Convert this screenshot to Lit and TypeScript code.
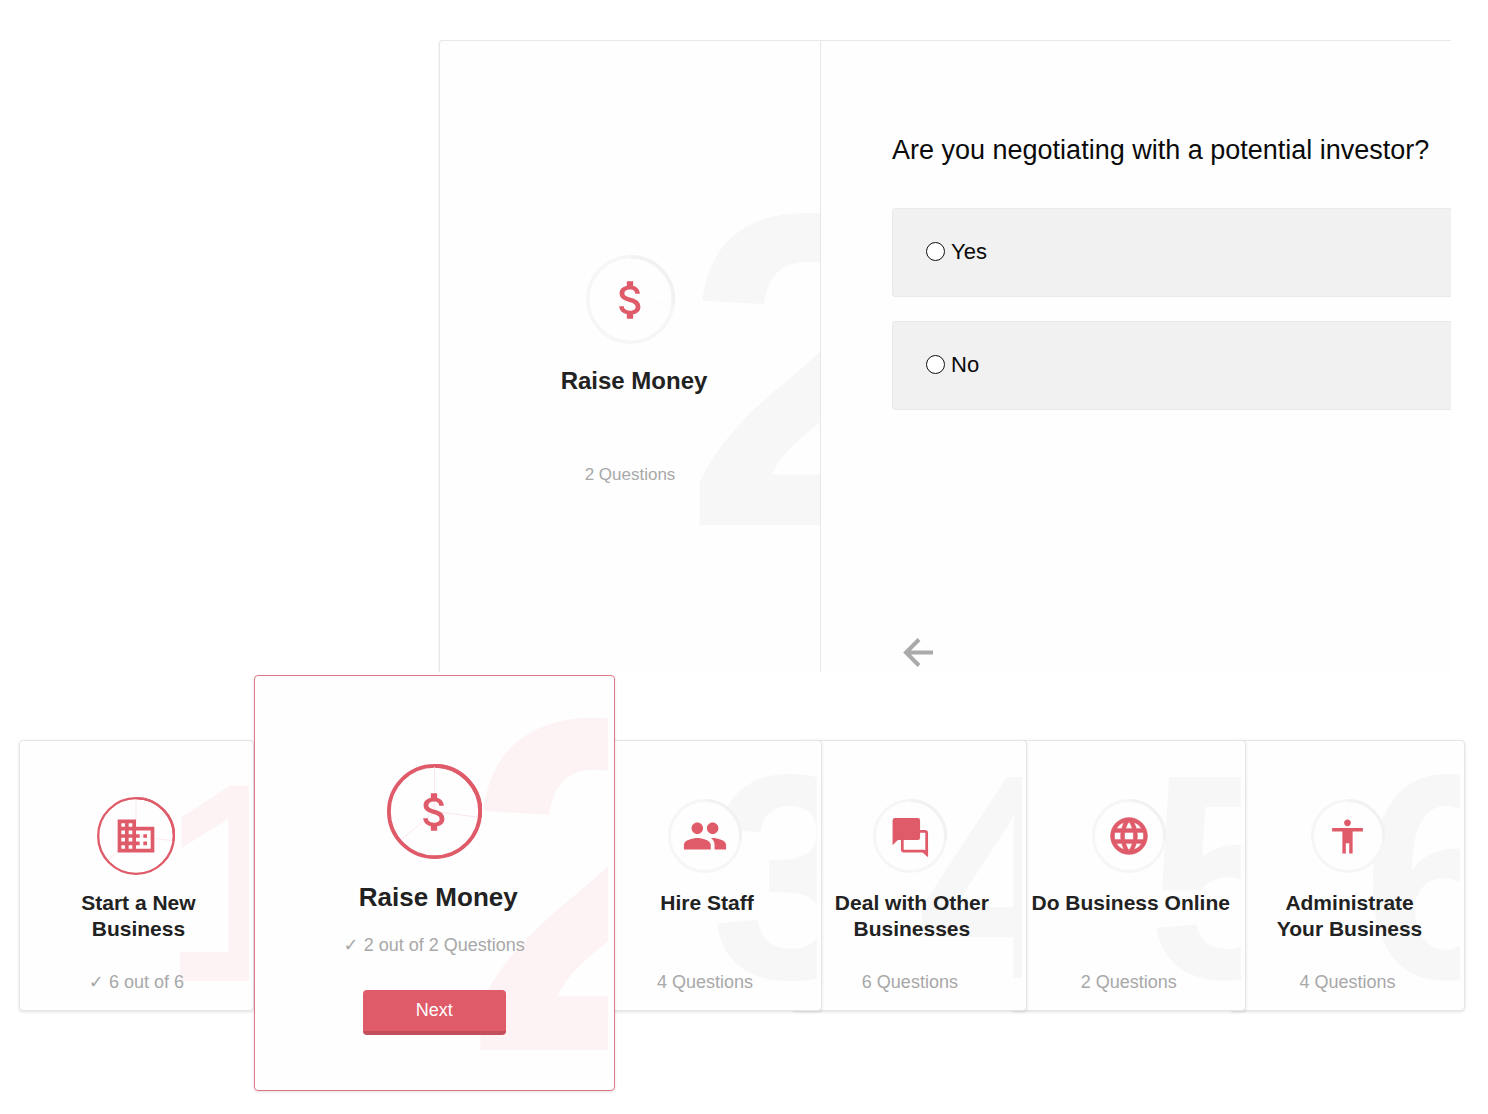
import { LitElement, html, css, svg, nothing } from "lit";
import { customElement, property, state } from "lit/decorators.js";
import { classMap } from "lit/directives/class-map.js";

const ICONS = {
  money: svg`<path d="M12.3 10.9c-2.27-.59-3-1.2-3-2.15 0-1.09 1.01-1.85 2.7-1.85 1.78 0 2.44.85 2.5 2.1h2.21c-.07-1.72-1.12-3.3-3.21-3.81V3h-3v2.16c-1.94.42-3.5 1.68-3.5 3.61 0 2.31 1.91 3.46 4.7 4.13 2.5.6 3 1.48 3 2.41 0 .69-.49 1.79-2.7 1.79-2.06 0-2.87-.92-2.98-2.1h-2.2c.12 2.19 1.76 3.42 3.68 3.83V21h3v-2.15c1.95-.37 3.5-1.5 3.5-3.55 0-2.84-2.43-3.81-4.7-4.4z"/>`,
  building: svg`<path d="M12 7V3H2v18h20V7H12zM6 19H4v-2h2v2zm0-4H4v-2h2v2zm0-4H4V9h2v2zm0-4H4V5h2v2zm4 12H8v-2h2v2zm0-4H8v-2h2v2zm0-4H8V9h2v2zm0-4H8V5h2v2zm10 12h-8v-2h2v-2h-2v-2h2v-2h-2V9h8v10zm-2-8h-2v2h2v-2zm0 4h-2v2h2v-2z"/>`,
  people: svg`<path d="M16 11c1.66 0 2.99-1.34 2.99-3S17.66 5 16 5c-1.66 0-3 1.34-3 3s1.34 3 3 3zm-8 0c1.66 0 2.99-1.34 2.99-3S9.66 5 8 5C6.34 5 5 6.34 5 8s1.34 3 3 3zm0 2c-2.33 0-7 1.17-7 3.5V19h14v-2.5c0-2.33-4.67-3.5-7-3.5zm8 0c-.29 0-.62.02-.97.05 1.16.84 1.97 1.97 1.97 3.45V19h6v-2.5c0-2.33-4.67-3.5-7-3.5z"/>`,
  chat: svg`<path d="M3.800 2.200h12.400a1.300 1.300 0 0 1 1.300 1.300v9.400a1.300 1.300 0 0 1-1.300 1.300H5.400L2.500 17V3.500a1.300 1.300 0 0 1 1.300-1.300z"/><path d="M17 9.500h3.300a.8.8 0 0 1 .8.8v11.400l-1.700-1.500H8.600a.8.8 0 0 1-.8-.8v-6" fill="none" stroke="currentColor" stroke-width="1.500"/><path d="M21.850 19v4.600l-3.400-3z"/>`,
  globe: svg`<path d="M11.99 2C6.47 2 2 6.48 2 12s4.47 10 9.99 10C17.52 22 22 17.52 22 12S17.52 2 11.99 2zm6.93 6h-2.95c-.32-1.25-.78-2.45-1.38-3.56 1.84.63 3.37 1.91 4.33 3.56zM12 4.04c.83 1.2 1.48 2.53 1.91 3.96h-3.82c.43-1.43 1.08-2.76 1.91-3.96zM4.26 14C4.1 13.36 4 12.69 4 12s.1-1.36.26-2h3.38c-.08.66-.14 1.32-.14 2 0 .68.06 1.34.14 2H4.26zm.82 2h2.95c.32 1.25.78 2.45 1.38 3.56-1.84-.63-3.37-1.9-4.33-3.56zm2.95-8H5.08c.96-1.66 2.49-2.93 4.33-3.56C8.81 5.55 8.35 6.75 8.03 8zM12 19.96c-.83-1.2-1.48-2.53-1.91-3.96h3.82c-.43 1.43-1.08 2.76-1.91 3.96zM14.34 14H9.66c-.09-.66-.16-1.32-.16-2 0-.68.07-1.35.16-2h4.68c.09.65.16 1.32.16 2 0 .68-.07 1.34-.16 2zm.25 5.56c.6-1.11 1.06-2.31 1.38-3.56h2.95c-.96 1.65-2.49 2.93-4.33 3.56zM16.36 14c.08-.66.14-1.32.14-2 0-.68-.06-1.34-.14-2h3.38c.16.64.26 1.31.26 2s-.1 1.36-.26 2h-3.38z" stroke="currentColor" stroke-width="0.400"/>`,
  person: svg`<path d="M12 2c1.1 0 2 .9 2 2s-.9 2-2 2-2-.9-2-2 .9-2 2-2zm9 7h-6v13h-2v-6h-2v6H9V9H3V7h18v2z"/>`,
};

type IconName = keyof typeof ICONS;

interface Topic {
  no: number;
  title: string;
  icon: IconName;
  count: string;
  done?: boolean;
  active?: boolean;
}

const TOPICS: Topic[] = [
  { no: 1, title: "Start a New\nBusiness", icon: "building", count: "6 out of 6", done: true },
  { no: 2, title: "Raise Money", icon: "money", count: "2 out of 2 Questions", done: true, active: true },
  { no: 3, title: "Hire Staff", icon: "people", count: "4 Questions" },
  { no: 4, title: "Deal with Other\nBusinesses", icon: "chat", count: "6 Questions" },
  { no: 5, title: "Do Business Online", icon: "globe", count: "2 Questions" },
  { no: 6, title: "Administrate\nYour Business", icon: "person", count: "4 Questions" },
];

/** Round progress ring split in three segments, with the topic icon in its middle. */
@customElement("progress-ring")
export class ProgressRing extends LitElement {
  @property() icon: IconName = "money";
  @property({ type: Boolean }) done = false;
  @property({ type: Number }) thickness = 4;

  static styles = css`
    :host {
      display: grid;
      width: 74px;
      height: 74px;
      color: #df5b69;
    }
    .ring,
    .glyph {
      grid-area: 1 / 1;
    }
    .ring {
      width: 100%;
      height: 100%;
    }
    .glyph {
      place-self: center;
      width: 44px;
      height: 44px;
      fill: currentColor;
      overflow: visible;
    }
    .money {
      width: 50px;
      height: 50px;
    }
    .people {
      width: 46px;
      height: 46px;
    }
    .person {
      width: 41px;
      height: 41px;
    }
  `;

  render() {
    const r = 50 - this.thickness / 2;
    const track = this.done ? "#df5b69" : "#f6f6f6";
    const lead = this.done ? "#df5b69" : "#f2f2f2";
    const spoke = this.done ? "#fbdfe3" : "#fbfbfb";
    return html`
      <svg class="ring" viewBox="0 0 100 100" aria-hidden="true">
        <circle cx="50" cy="50" r=${r} fill="#fefefe" stroke=${track} stroke-width=${this.thickness} />
        <path d="M50 ${50 - r}A${r} ${r} 0 0 1 ${50 + r} 56" fill="none" stroke=${lead} stroke-width=${this.thickness} />
        <path d="M50 50V3M50 50L96 56M50 50L15 80" stroke=${spoke} stroke-width="0.8" />
      </svg>
      <svg class="glyph ${this.icon}" viewBox="0 0 24 24" aria-hidden="true">${ICONS[this.icon]}</svg>
    `;
  }
}

@customElement("topic-card")
export class TopicCard extends LitElement {
  @property({ attribute: false }) topic!: Topic;

  static styles = css`
    :host {
      display: block;
    }
    .card {
      position: relative;
      box-sizing: border-box;
      display: flex;
      flex-direction: column;
      align-items: center;
      padding: 58px 12px 16px;
      border: 1px solid #e6e6e6;
      border-radius: 4px;
      background: #fefefe;
      box-shadow: 0 1px 3px rgba(0, 0, 0, 0.12);
      text-align: center;
    }
    .ghost {
      position: absolute;
      inset: 0 4px 0 0;
      overflow: hidden;
      color: #f7f7f7;
      font-weight: 700;
      font-size: 292px;
      line-height: 1;
    }
    .digit {
      position: absolute;
      top: -10px;
    }
    .n1 { left: 142px; }
    .n2 { left: 209px; }
    .n3 { left: 122px; }
    .n4 { left: 124px; }
    .n5 { left: 135px; }
    .n6 { left: 131px; }
    .ring-slot,
    .title,
    .count,
    .next {
      position: relative;
    }
    .ring-slot {
      display: flex;
      align-items: center;
      height: 74px;
    }
    .title {
      margin: 17px 0 0;
      padding-left: 4px;
      min-height: 52px;
      color: #222;
      font-size: 21px;
      line-height: 26px;
      font-weight: 700;
      white-space: pre-line;
    }
    .count {
      margin: 28px 0 0;
      color: #a8a8a8;
      font-size: 18px;
      line-height: 24px;
    }
    .check {
      font-family: "DejaVu Sans", sans-serif;
      font-size: 18px;
      font-weight: 700;
      line-height: 1;
    }
    .done .ghost {
      color: #fdf3f4;
      font-size: 284px;
    }
    .done .digit {
      top: 0;
    }
    .done progress-ring {
      width: 78px;
      height: 78px;
    }
    .active {
      padding: 88px 12px 55px;
      border-color: #e57784;
    }
    .active .ghost {
      right: 6px;
      font-size: 476px;
    }
    .active .digit {
      top: -29px;
    }
    .active .ring-slot {
      height: 95px;
    }
    .active progress-ring {
      width: 95px;
      height: 95px;
    }
    .active .title {
      margin-top: 22px;
      padding-left: 8px;
      min-height: 0;
      font-size: 26px;
      line-height: 32px;
    }
    .active .count {
      margin-top: 20px;
    }
    .next {
      margin-top: 33px;
      min-width: 143px;
      height: 45px;
      padding: 0 16px;
      border: 0;
      border-bottom: 4px solid #c44f5c;
      border-radius: 4px;
      background: #df5b69;
      color: #fff;
      font: inherit;
      font-size: 18px;
      cursor: pointer;
    }
  `;

  render() {
    const t = this.topic;
    return html`
      <article class=${classMap({ card: true, done: !!t.done, active: !!t.active })}>
        <div class="ghost" aria-hidden="true"><span class="digit n${t.no}">${t.no}</span></div>
        <div class="ring-slot">
          <progress-ring .icon=${t.icon} .done=${!!t.done} .thickness=${t.done && !t.active ? 3 : 4}></progress-ring>
        </div>
        <h3 class="title">${t.title}</h3>
        <p class="count">${t.done ? html`<span class="check">✓</span> ` : nothing}${t.count}</p>
        ${t.active ? html`<button class="next" type="button">Next</button>` : nothing}
      </article>
    `;
  }
}

@customElement("app-root")
export class AppRoot extends LitElement {
  @state() private answer = "";

  static styles = css`
    :host {
      display: block;
      min-height: 100vh;
      background: #fff;
      color: #0a0a0a;
      font-family: "Liberation Sans", Arial, Helvetica, sans-serif;
    }
    .page {
      padding: 40px 23px 23px 19px;
    }
    .quiz {
      display: grid;
      grid-template-columns: 381px minmax(0, 1fr);
      margin: 0 14px 0 420px;
      border: solid #e8e8e8;
      border-width: 1px 0 0 1px;
      border-radius: 4px 0 0 0;
      background: #fefefe;
      box-shadow: -1px 0 1px rgba(0, 0, 0, 0.04);
    }
    .intro {
      position: relative;
      display: flex;
      flex-direction: column;
      align-items: center;
      padding-top: 214px;
      border-right: 1px solid #e8e8e8;
    }
    .ghost {
      position: absolute;
      inset: 0;
      overflow: hidden;
      color: #f7f7f7;
      font-weight: 700;
      font-size: 447px;
      line-height: 1;
    }
    .digit {
      position: absolute;
      top: 106px;
      left: 244px;
    }
    .intro progress-ring {
      position: relative;
      width: 89px;
      height: 89px;
    }
    .title {
      position: relative;
      margin: 22px 0 0;
      padding-left: 8px;
      color: #222;
      font-size: 24px;
      line-height: 30px;
      font-weight: 700;
    }
    .count {
      position: relative;
      margin: 69px 0 0;
      color: #a8a8a8;
      font-size: 17px;
      line-height: 20px;
    }
    .form {
      padding: 93px 0 0 71px;
    }
    .options {
      display: grid;
      gap: 24px;
      margin: 0;
      padding: 0;
      border: 0;
    }
    .question {
      padding: 0;
      margin-bottom: 42px;
      font-size: 27px;
      line-height: 32px;
    }
    .option {
      display: flex;
      align-items: center;
      gap: 6px;
      box-sizing: border-box;
      min-height: 89px;
      padding: 0 33px 2px;
      border: solid #e9e9e9;
      border-width: 1px 0 1px 1px;
      border-radius: 4px 0 0 4px;
      background: #f1f1f1;
      font-size: 22px;
      line-height: 28px;
      cursor: pointer;
    }
    .radio {
      appearance: none;
      box-sizing: border-box;
      width: 19px;
      height: 19px;
      margin: 0;
      border: 1px solid #111;
      border-radius: 50%;
      background: #fff;
    }
    .radio:checked {
      background: radial-gradient(#df5b69 45%, #fff 50%);
    }
    .back {
      display: block;
      margin: 224px 0 0 7px;
      padding: 4px;
      border: 0;
      background: none;
      color: #aaa;
      cursor: pointer;
    }
    .back svg {
      display: block;
      width: 30px;
      height: 30px;
    }
    .topics {
      display: flex;
      align-items: flex-start;
      margin-top: 3px;
    }
    .topic {
      position: relative;
      flex: 235 1 0;
      margin-top: 65px;
    }
    .current {
      flex-grow: 361;
      margin-top: 0;
    }
    .t1 { z-index: 1; }
    .t2 { z-index: 6; }
    .t3 { z-index: 5; margin-left: -27px; }
    .t4 { z-index: 4; margin-left: -30px; }
    .t5 { z-index: 3; margin-left: -16px; }
    .t6 { z-index: 2; margin-left: -16px; }
  `;

  private pick(value: string) {
    this.answer = value;
  }

  render() {
    return html`
      <main class="page">
        <section class="quiz">
          <div class="intro">
            <div class="ghost" aria-hidden="true"><span class="digit">2</span></div>
            <progress-ring .icon=${"money"}></progress-ring>
            <h2 class="title">Raise Money</h2>
            <p class="count">2 Questions</p>
          </div>
          <form class="form">
            <fieldset class="options">
              <legend class="question">Are you negotiating with a potential investor?</legend>
              ${["Yes", "No"].map(
                (label) => html`
                  <label class="option">
                    <input
                      class="radio"
                      type="radio"
                      name="investor"
                      value=${label}
                      .checked=${this.answer === label}
                      @change=${() => this.pick(label)}
                    />
                    <span>${label}</span>
                  </label>
                `
              )}
            </fieldset>
            <button class="back" type="button" aria-label="Back">
              <svg viewBox="0 0 30 30" aria-hidden="true">
                <path d="M16 1.500L3 14.500L16 27.500M3 14.500H30" fill="none" stroke="currentColor" stroke-width="4" />
              </svg>
            </button>
          </form>
        </section>
        <section class="topics">
          ${TOPICS.map(
            (t) => html`<topic-card class="topic t${t.no} ${t.active ? "current" : ""}" .topic=${t}></topic-card>`
          )}
        </section>
      </main>
    `;
  }
}
